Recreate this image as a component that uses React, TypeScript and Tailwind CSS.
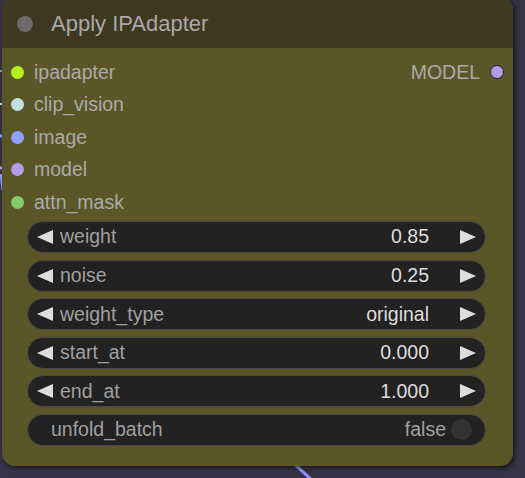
import React from 'react';

const inputs = [
  { name: 'ipadapter', color: '#b4f01c' },
  { name: 'clip_vision', color: '#c4dfe4' },
  { name: 'image', color: '#8fa0ff' },
  { name: 'model', color: '#b79be6' },
  { name: 'attn_mask', color: '#85cc66' },
];

const numberWidgets = [
  { name: 'weight', value: '0.85' },
  { name: 'noise', value: '0.25' },
  { name: 'weight_type', value: 'original' },
  { name: 'start_at', value: '0.000' },
  { name: 'end_at', value: '1.000' },
];

function Arrow({ dir }: { dir: 'left' | 'right' }) {
  return (
    <svg width="16" height="16" viewBox="0 0 16 16" className="shrink-0">
      {dir === 'left' ? (
        <polygon points="16,1 0,8 16,15" fill="#dddddd" />
      ) : (
        <polygon points="0,1 16,8 0,15" fill="#dddddd" />
      )}
    </svg>
  );
}

function NumberWidget({ name, value }: { name: string; value: string }) {
  return (
    <div className="flex h-[32px] items-center rounded-full border border-[#4a4a4a] bg-[#222222] pl-[9px] pr-[9px]">
      <Arrow dir="left" />
      <span className="ml-[7px] text-[#a0a0a0]">{name}</span>
      <span className="flex-1" />
      <span className="text-[#dddddd]">{value}</span>
      <span className="w-[31px]" />
      <Arrow dir="right" />
    </div>
  );
}

function ToggleWidget() {
  return (
    <div className="flex h-[32px] items-center rounded-full border border-[#4a4a4a] bg-[#222222] pl-[23px] pr-[13px]">
      <span className="text-[#a0a0a0]">unfold_batch</span>
      <span className="flex-1" />
      <span className="text-[#a0a0a0]">false</span>
      <span className="ml-[5px] h-[21px] w-[21px] rounded-full bg-[#333333]" />
    </div>
  );
}

export default function App() {
  return (
    <div
      className="relative h-[478px] w-[525px] overflow-hidden bg-[#353345]"
      style={{ fontFamily: '"Liberation Sans", Arial, sans-serif' }}
    >
      {/* wires behind the node */}
      <svg className="absolute left-0 top-0" width="525" height="478">
        <line x1="-4" y1="71" x2="6" y2="71" stroke="#9a9a9a" strokeWidth="2" />
        <line x1="-4" y1="104" x2="6" y2="104" stroke="#c4dfe4" strokeWidth="2" />
        <line x1="-4" y1="135" x2="6" y2="137" stroke="#8fa0ff" strokeWidth="3" />
        <line x1="-4" y1="167" x2="6" y2="169" stroke="#b79be6" strokeWidth="3" />
        <line x1="1" y1="174" x2="3" y2="190" stroke="#8fa0ff" strokeWidth="3" />
        <line x1="290" y1="460" x2="314" y2="482" stroke="#8f95ff" strokeWidth="3" />
      </svg>

      <div className="absolute left-[2px] top-[-3px] flex h-[469px] w-[511px] flex-col overflow-hidden rounded-[13px] bg-[#5b5627] shadow-[2px_2px_4px_rgba(0,0,0,0.55)]">
        <div className="flex h-[51px] shrink-0 items-center bg-[#3e3820] pl-[15px] pt-[2px]">
          <span className="h-[16px] w-[16px] rounded-full bg-[#6b6b6b]" />
          <span className="ml-[18px] text-[22px] text-[#a9a9a9]">Apply IPAdapter</span>
        </div>

        <div className="flex flex-col pt-[8px] text-[19.5px]">
          {inputs.map((slot, i) => (
            <div key={slot.name} className="flex h-[32.5px] items-center">
              <span
                className="ml-[9px] h-[13px] w-[13px] rounded-full"
                style={{ backgroundColor: slot.color }}
              />
              <span className="ml-[10px] text-[#aaaaaa]">{slot.name}</span>
              {i === 0 && (
                <>
                  <span className="flex-1" />
                  <span className="text-[#aaaaaa]">MODEL</span>
                  <span className="ml-[10px] mr-[9px] h-[14px] w-[14px] rounded-full border border-[#222222] bg-[#b79be6]" />
                </>
              )}
            </div>
          ))}

          <div className="ml-[25px] mr-[27px] mt-[2.5px] flex flex-col gap-[6.6px]">
            {numberWidgets.map((w) => (
              <NumberWidget key={w.name} name={w.name} value={w.value} />
            ))}
            <ToggleWidget />
          </div>
        </div>
      </div>
    </div>
  );
}
